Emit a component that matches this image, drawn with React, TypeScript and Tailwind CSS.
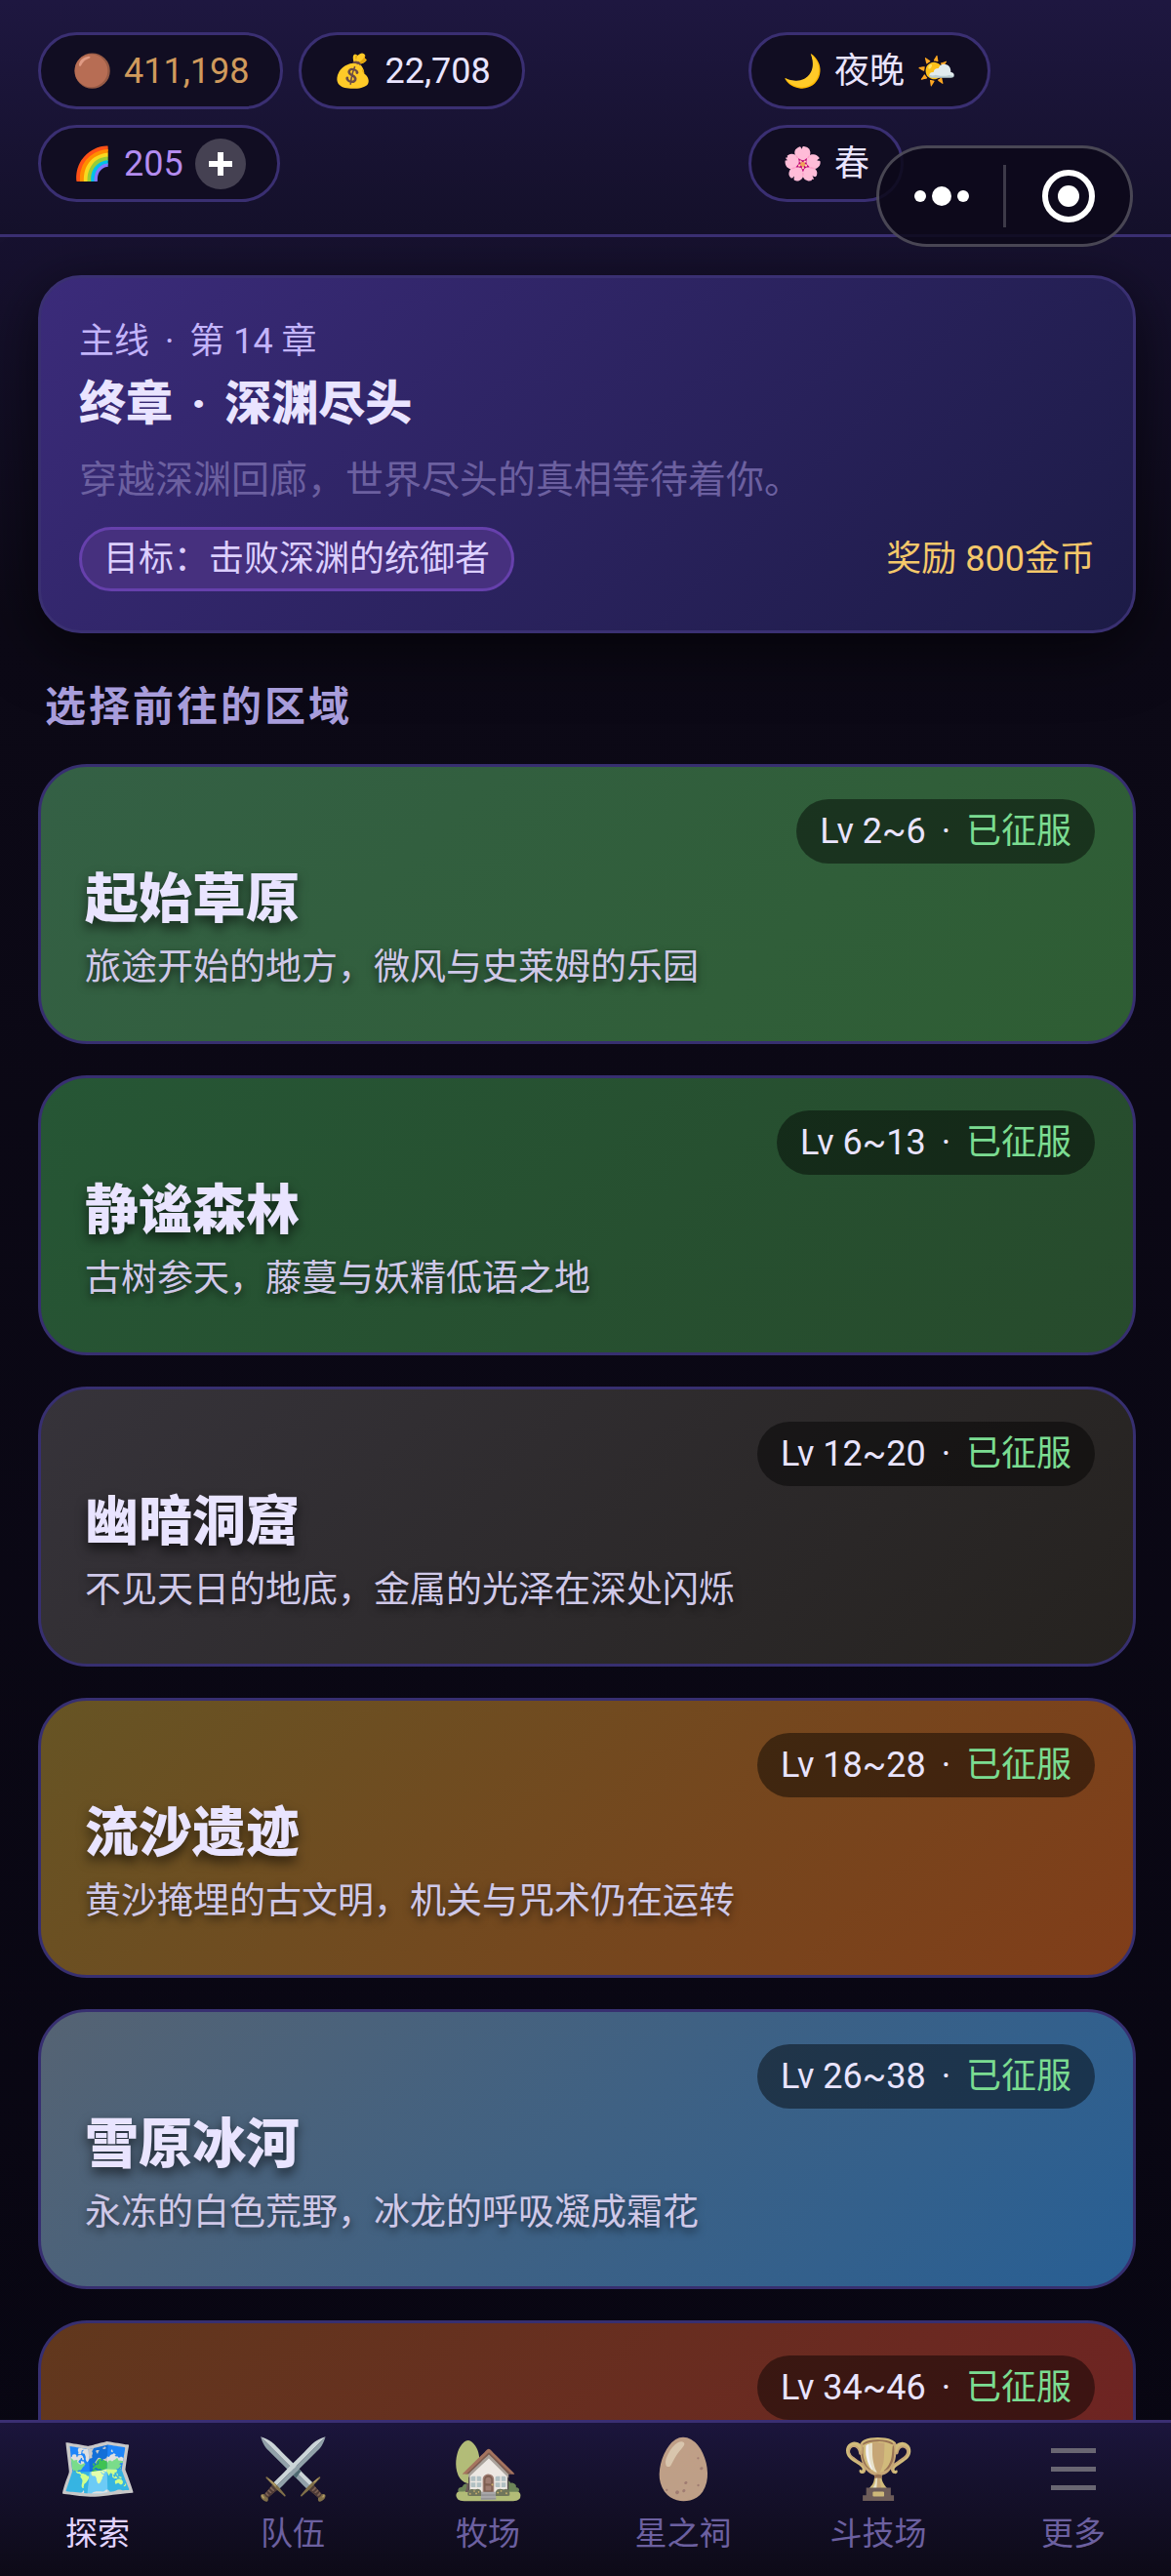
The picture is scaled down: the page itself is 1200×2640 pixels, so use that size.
import type { ReactNode } from 'react';

const regions = [
  {
    name: '起始草原',
    desc: '旅途开始的地方，微风与史莱姆的乐园',
    level: '2~6',
    bg: 'bg-[linear-gradient(135deg,#346045,#2e5d33)]',
  },
  {
    name: '静谧森林',
    desc: '古树参天，藤蔓与妖精低语之地',
    level: '6~13',
    bg: 'bg-[linear-gradient(135deg,#265635,#274b2c)]',
  },
  {
    name: '幽暗洞窟',
    desc: '不见天日的地底，金属的光泽在深处闪烁',
    level: '12~20',
    bg: 'bg-[linear-gradient(135deg,#36333a,#25221f)]',
  },
  {
    name: '流沙遗迹',
    desc: '黄沙掩埋的古文明，机关与咒术仍在运转',
    level: '18~28',
    bg: 'bg-[linear-gradient(135deg,#665424,#803d19)]',
  },
  {
    name: '雪原冰河',
    desc: '永冻的白色荒野，冰龙的呼吸凝成霜花',
    level: '26~38',
    bg: 'bg-[linear-gradient(135deg,#556373,#285f94)]',
  },
  {
    level: '34~46',
    bg: 'bg-[linear-gradient(135deg,#61381d,#702123)]',
  },
];

const tabs = [
  { icon: '🗺️', label: '探索' },
  { icon: '⚔️', label: '队伍' },
  { icon: '🏡', label: '牧场' },
  { icon: '🥚', label: '星之祠' },
  { icon: '🏆', label: '斗技场' },
  { icon: '', label: '更多' },
];

function Pill({ children, className = '' }: { children: ReactNode; className?: string }) {
  return (
    <div
      className={`flex h-[79px] items-center gap-3 rounded-full border-3 border-[#3a2f72] bg-[#110d22] px-8 text-[36px] leading-[54px] ${className}`}
    >
      {children}
    </div>
  );
}

function Emoji({ children }: { children: ReactNode }) {
  return <span className="text-[33px]">{children}</span>;
}

function Dot() {
  return <span className="mx-[7px]"> · </span>;
}

function MenuIcon() {
  return (
    <svg viewBox="0 0 46 44" className="h-11 w-[46px]" fill="#706985">
      <rect y="0" width="46" height="5" />
      <rect y="19" width="46" height="5" />
      <rect y="38" width="46" height="5" />
    </svg>
  );
}

function Header() {
  return (
    <header className="relative flex items-start gap-4 border-b-3 border-[#3a2f72] bg-linear-to-b from-[#1e1740] to-[#14102a] py-[33px] pr-9 pl-[39px]">
      <div className="flex flex-1 flex-wrap gap-4">
        <Pill className="text-[#d09a5c]">
          <Emoji>🟤</Emoji>
          <span>411,198</span>
        </Pill>
        <Pill>
          <Emoji>💰</Emoji>
          <span>22,708</span>
        </Pill>
        <Pill className="text-[#b48cf0]">
          <Emoji>🌈</Emoji>
          <span>205</span>
          <button aria-label="充值" className="flex size-[52px] items-center justify-center rounded-full bg-[#454152]">
            <svg viewBox="0 0 24 24" className="size-6" fill="#ffffff">
              <path d="M9 0h6v9h9v6h-9v9H9v-9H0V9h9z" />
            </svg>
          </button>
        </Pill>
      </div>
      <div className="flex w-[397px] flex-wrap gap-4">
        <Pill>
          <Emoji>🌙</Emoji>
          <span>夜晚</span>
          <Emoji>🌤️</Emoji>
        </Pill>
        <Pill>
          <Emoji>🌸</Emoji>
          <span>春</span>
        </Pill>
      </div>

      <div className="absolute top-[149px] right-[39px] flex h-[104px] w-[263px] items-center rounded-full border-3 border-white/25 bg-[#0c0819]/85">
        <button aria-label="菜单" className="flex flex-1 justify-center">
          <svg viewBox="0 0 56 22" className="h-[22px] w-14" fill="#ffffff">
            <circle cx="6" cy="11" r="6" />
            <circle cx="28" cy="11" r="10" />
            <circle cx="50" cy="11" r="6" />
          </svg>
        </button>
        <span className="h-16 w-[3px] bg-white/20" />
        <button aria-label="关闭" className="flex flex-1 justify-center">
          <svg viewBox="0 0 54 54" className="size-[54px]">
            <circle cx="27" cy="27" r="24" fill="none" stroke="#ffffff" strokeWidth="6" />
            <circle cx="27" cy="27" r="11" fill="#ffffff" />
          </svg>
        </button>
      </div>
    </header>
  );
}

function QuestCard() {
  return (
    <section className="rounded-[44px] border-3 border-[#3a3072] bg-[linear-gradient(135deg,#3b2b7a,#1c1b46)] px-[39px] pt-[39px] pb-10 shadow-[0_16px_64px_rgba(0,0,0,0.6)]">
      <p className="text-[36px] leading-[52px] text-[#c3b4fa]">
        主线
        <Dot />第 14 章
      </p>
      <h1 className="text-[48px] leading-[76px] font-black text-[#e9e4ff]">
        终章
        <Dot />
        深渊尽头
      </h1>
      <p className="mt-2 text-[39px] leading-[64px] text-[#6c60a0]">穿越深渊回廊，世界尽头的真相等待着你。</p>
      <div className="mt-4 flex items-center justify-between text-[36px]">
        <span className="rounded-full border-3 border-[#6640ac] bg-[#46307e] px-[22px] leading-[60px] text-[#dccfff]">
          目标：击败深渊的统御者
        </span>
        <span className="text-[#f5c86a]">奖励 800金币</span>
      </div>
    </section>
  );
}

function RegionCard({ region }: { region: (typeof regions)[number] }) {
  return (
    <button
      className={`relative flex min-h-[287px] shrink-0 flex-col justify-end rounded-[50px] border-3 border-[#372f70] px-[45px] pb-[45px] text-left ${region.bg}`}
    >
      <span className="absolute top-[33px] right-[39px] rounded-full bg-black/45 px-6 text-[36px] leading-[66px]">
        Lv {region.level}
        <Dot />
        <span className="text-[#7bdc91]">已征服</span>
      </span>
      {region.name && (
        <span className="text-[55px] leading-[82px] font-black [text-shadow:0_6px_12px_rgba(0,0,0,0.6)]">
          {region.name}
        </span>
      )}
      {region.desc && (
        <span className="text-[37px] leading-[60px] text-[#cfc8e8] [text-shadow:0_4px_9px_rgba(0,0,0,0.6)]">
          {region.desc}
        </span>
      )}
    </button>
  );
}

function TabBar() {
  return (
    <nav className="grid shrink-0 grid-cols-6 border-t-3 border-[#3a2f72] bg-linear-to-b from-[#1b153c] to-[#0d0a17] pt-1.5 pb-[19px]">
      {tabs.map((tab, i) => (
        <button
          key={tab.label}
          className={`flex flex-col items-center text-[33px] leading-[48px] ${i === 0 ? 'text-[#e2d4ff]' : 'text-[#6c60a0]'}`}
        >
          <span
            className={`flex h-[84px] items-center leading-none ${i === 0 ? 'text-[66px]' : 'text-[60px] opacity-95 grayscale-60'}`}
          >
            {tab.icon || <MenuIcon />}
          </span>
          {tab.label}
        </button>
      ))}
    </nav>
  );
}

function App() {
  return (
    <div className="flex h-screen flex-col bg-[linear-gradient(180deg,#1e1740_0%,#0c0916_24%,#080612_100%)] font-[Roboto,'Noto_Sans_CJK_SC',sans-serif] text-[#e9e4ff]">
      <Header />
      <main className="flex min-h-0 flex-1 flex-col overflow-hidden pt-[39px] pr-9 pl-[39px]">
        <QuestCard />
        <h2 className="mt-[42px] mb-6 pl-[7px] text-[42px] leading-[68px] font-bold tracking-[3px] text-[#a89ddb]">
          选择前往的区域
        </h2>
        <div className="flex flex-col gap-8">
          {regions.map((region) => (
            <RegionCard key={region.level} region={region} />
          ))}
        </div>
      </main>
      <TabBar />
    </div>
  );
}

export default App;
